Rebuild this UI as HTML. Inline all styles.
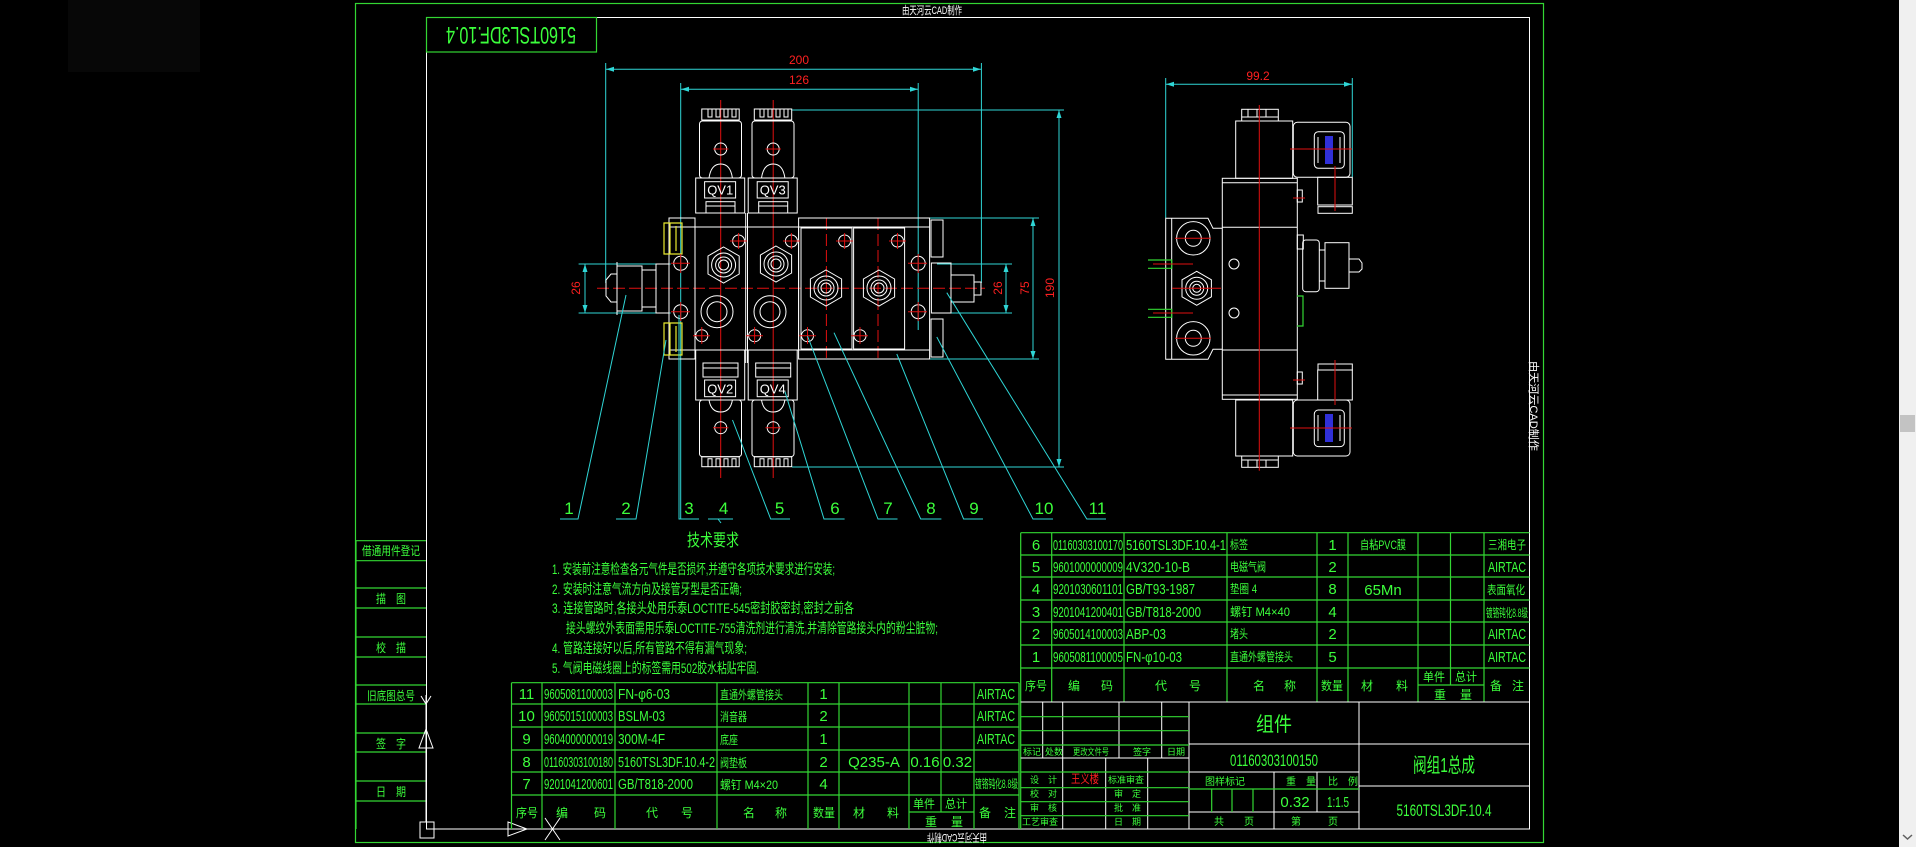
<!DOCTYPE html>
<html><head><meta charset="utf-8"><style>
html,body{margin:0;padding:0;background:#000;overflow:hidden}
svg{display:block}
.w{stroke:#fff;fill:none;stroke-width:1}
.c{stroke:#2fd6d6;fill:none;stroke-width:1}
.gl{stroke:#33d633;fill:none;stroke-width:1.2}
.r{stroke:#e01010;fill:none;stroke-width:1}
.rd{stroke:#e01010;fill:none;stroke-width:1;stroke-dasharray:12 4}
.y{stroke:#e8e830;fill:none;stroke-width:1.2}
text{font-family:"Liberation Sans","Noto Sans CJK SC",sans-serif}
.t{fill:#3cff3c;font-size:15px}
.tc{fill:#3cff3c;font-size:12px}
.tr{fill:#ff2020;font-size:12px}
</style></head><body>
<svg width="1916" height="847" viewBox="0 0 1916 847" xmlns="http://www.w3.org/2000/svg">
<rect width="1916" height="847" fill="#000"/>
<rect x="68" y="0" width="132" height="72" fill="#070707"/>
<!-- scrollbar -->
<rect x="1899" y="0" width="17" height="847" fill="#f0f0f0"/>
<rect x="1900" y="415" width="15" height="17" fill="#c3c3c3"/>
<path d="M1903 835 l4.5 4 l4.5 -4" stroke="#606060" fill="none" stroke-width="1.5"/>
<!-- frames -->
<rect x="355.5" y="3.5" width="1188" height="839" class="gl"/>
<rect x="426.5" y="17.5" width="1103" height="811.5" class="w"/>
<rect x="426.5" y="17.5" width="170" height="34.5" class="gl"/>
<text transform="rotate(180 511 35)" x="511" y="43" text-anchor="middle" class="t" style="font-size:24px" textLength="130" lengthAdjust="spacingAndGlyphs">5160TSL3DF.10.4</text>
<text x="932" y="14" text-anchor="middle" fill="#fff" font-size="11" textLength="60" lengthAdjust="spacingAndGlyphs">由天河云CAD制作</text>
<text transform="rotate(180 957 838)" x="957" y="842" text-anchor="middle" fill="#fff" font-size="11" textLength="60" lengthAdjust="spacingAndGlyphs">由天河云CAD制作</text>
<text transform="rotate(90 1534 406)" x="1534" y="410" text-anchor="middle" fill="#fff" font-size="11" textLength="90" lengthAdjust="spacingAndGlyphs">由天河云CAD制作</text>

<!-- left column -->
<g class="gl">
<path d="M356 540.7H426M356 560.7H426M356 588H426M356 608H426M356 637H426M356 657H426M356 685H426M356 704H426M356 733H426M356 752H426M356 781H426M356 801H426M356 540.7V829"/>
</g>
<g class="tc" text-anchor="middle">
<text x="391" y="555" textLength="58" lengthAdjust="spacingAndGlyphs">借通用件登记</text>
<text x="391" y="603" textLength="30" lengthAdjust="spacingAndGlyphs">描　图</text>
<text x="391" y="652" textLength="30" lengthAdjust="spacingAndGlyphs">校　描</text>
<text x="391" y="700" textLength="48" lengthAdjust="spacingAndGlyphs">旧底图总号</text>
<text x="391" y="748" textLength="30" lengthAdjust="spacingAndGlyphs">签　字</text>
<text x="391" y="796" textLength="30" lengthAdjust="spacingAndGlyphs">日　期</text>
</g>
<!-- UCS icon -->
<g class="w">
<path d="M426 695V822M421 696l5 8l5 -8M426 729l-7 19h14z M420 822h14v16h-14z M434 829H510 M508 822l19 7l-19 7z M545 818l15 22M560 818l-15 22"/>
</g>

<!-- technical requirements -->
<text x="713" y="546" text-anchor="middle" class="t" style="font-size:17px" textLength="52" lengthAdjust="spacingAndGlyphs">技术要求</text>
<g class="t" style="font-size:14px">
<text x="552" y="574" textLength="283" lengthAdjust="spacingAndGlyphs">1. 安装前注意检查各元气件是否损坏,并遵守各项技术要求进行安装;</text>
<text x="552" y="594" textLength="190" lengthAdjust="spacingAndGlyphs">2. 安装时注意气流方向及接管牙型是否正确;</text>
<text x="552" y="613" textLength="302" lengthAdjust="spacingAndGlyphs">3. 连接管路时,各接头处用乐泰LOCTITE-545密封胶密封,密封之前各</text>
<text x="566" y="633" textLength="372" lengthAdjust="spacingAndGlyphs">接头螺纹外表面需用乐泰LOCTITE-755清洗剂进行清洗,并清除管路接头内的粉尘脏物;</text>
<text x="552" y="653" textLength="195" lengthAdjust="spacingAndGlyphs">4. 管路连接好以后,所有管路不得有漏气现象;</text>
<text x="552" y="673" textLength="207" lengthAdjust="spacingAndGlyphs">5. 气阀电磁线圈上的标签需用502胶水粘贴牢固.</text>
</g>

<!-- lower-left parts table -->
<g class="gl">
<path d="M511.5 682.7H1019M511.5 704H1019M511.5 727H1019M511.5 750H1019M511.5 772H1019M511.5 795H1019M909 812H974"/>
<path d="M511.5 682.7V829M542 682.7V829M615 682.7V829M717 682.7V829M808 682.7V829M839 682.7V829M909 682.7V829M941 682.7V812M974 682.7V829M1019 682.7V829"/>
</g>
<g class="t">
<g text-anchor="middle"><text x="526.5" y="699">11</text><text x="526.5" y="721">10</text><text x="526.5" y="744">9</text><text x="526.5" y="767">8</text><text x="526.5" y="789">7</text>
<text x="823.5" y="699">1</text><text x="823.5" y="721">2</text><text x="823.5" y="744">1</text><text x="823.5" y="767">2</text><text x="823.5" y="789">4</text>
<text x="874" y="767">Q235-A</text><text x="925" y="767">0.16</text><text x="957.5" y="767">0.32</text></g>
<text x="544" y="699" textLength="69" lengthAdjust="spacingAndGlyphs">9605081100003</text>
<text x="544" y="721" textLength="69" lengthAdjust="spacingAndGlyphs">9605015100003</text>
<text x="544" y="744" textLength="69" lengthAdjust="spacingAndGlyphs">9604000000019</text>
<text x="544" y="767" textLength="69" lengthAdjust="spacingAndGlyphs">01160303100180</text>
<text x="544" y="789" textLength="69" lengthAdjust="spacingAndGlyphs">9201041200601</text>
<text x="618" y="699" textLength="52" lengthAdjust="spacingAndGlyphs">FN-φ6-03</text>
<text x="618" y="721" textLength="47" lengthAdjust="spacingAndGlyphs">BSLM-03</text>
<text x="618" y="744" textLength="47" lengthAdjust="spacingAndGlyphs">300M-4F</text>
<text x="618" y="767" textLength="97" lengthAdjust="spacingAndGlyphs">5160TSL3DF.10.4-2</text>
<text x="618" y="789" textLength="75" lengthAdjust="spacingAndGlyphs">GB/T818-2000</text>
<text x="977" y="699" textLength="38" lengthAdjust="spacingAndGlyphs">AIRTAC</text>
<text x="977" y="721" textLength="38" lengthAdjust="spacingAndGlyphs">AIRTAC</text>
<text x="977" y="744" textLength="38" lengthAdjust="spacingAndGlyphs">AIRTAC</text>
</g>
<g class="tc">
<text x="720" y="699" textLength="63" lengthAdjust="spacingAndGlyphs">直通外螺管接头</text>
<text x="720" y="721" textLength="27" lengthAdjust="spacingAndGlyphs">消音器</text>
<text x="720" y="744" textLength="18" lengthAdjust="spacingAndGlyphs">底座</text>
<text x="720" y="767" textLength="27" lengthAdjust="spacingAndGlyphs">阀垫板</text>
<text x="720" y="789" textLength="58" lengthAdjust="spacingAndGlyphs">螺钉 M4×20</text>
<text x="975" y="788" textLength="43" lengthAdjust="spacingAndGlyphs">镀铬钝化8.8级</text>
<text x="516" y="817" textLength="22" lengthAdjust="spacingAndGlyphs">序号</text><text x="556" y="817">编</text><text x="594" y="817">码</text>
<text x="646" y="817">代</text><text x="681" y="817">号</text><text x="743" y="817">名</text><text x="775" y="817">称</text>
<text x="813" y="817" textLength="22" lengthAdjust="spacingAndGlyphs">数量</text><text x="853" y="817">材</text><text x="887" y="817">料</text>
<text x="913" y="808" textLength="22" lengthAdjust="spacingAndGlyphs">单件</text><text x="945" y="808" textLength="22" lengthAdjust="spacingAndGlyphs">总计</text><text x="925" y="826">重</text><text x="951" y="826">量</text>
<text x="979" y="817">备</text><text x="1004" y="817">注</text>
</g>

<!-- right parts table -->
<g class="gl">
<path d="M1020.7 532.7H1529.5M1020.7 555H1529.5M1020.7 577H1529.5M1020.7 600H1529.5M1020.7 622H1529.5M1020.7 645H1529.5M1020.7 668H1529.5M1418 685H1484"/>
<path d="M1020.7 532.7V702M1051.7 532.7V702M1124 532.7V702M1227 532.7V702M1317 532.7V702M1348 532.7V702M1418 532.7V702M1450.5 532.7V685M1484 532.7V702"/>
<path d="M1020.7 702V829"/>
</g>
<g class="t">
<g text-anchor="middle"><text x="1036" y="550">6</text><text x="1036" y="572">5</text><text x="1036" y="594">4</text><text x="1036" y="617">3</text><text x="1036" y="639">2</text><text x="1036" y="662">1</text>
<text x="1332.5" y="550">1</text><text x="1332.5" y="572">2</text><text x="1332.5" y="594">8</text><text x="1332.5" y="617">4</text><text x="1332.5" y="639">2</text><text x="1332.5" y="662">5</text>
<text x="1383" y="595">65Mn</text></g>
<text x="1053" y="550" textLength="70" lengthAdjust="spacingAndGlyphs">01160303100170</text>
<text x="1053" y="572" textLength="70" lengthAdjust="spacingAndGlyphs">9601000000009</text>
<text x="1053" y="594" textLength="70" lengthAdjust="spacingAndGlyphs">9201030601101</text>
<text x="1053" y="617" textLength="70" lengthAdjust="spacingAndGlyphs">9201041200401</text>
<text x="1053" y="639" textLength="70" lengthAdjust="spacingAndGlyphs">9605014100003</text>
<text x="1053" y="662" textLength="70" lengthAdjust="spacingAndGlyphs">9605081100005</text>
<text x="1126" y="550" textLength="100" lengthAdjust="spacingAndGlyphs">5160TSL3DF.10.4-1</text>
<text x="1126" y="572" textLength="64" lengthAdjust="spacingAndGlyphs">4V320-10-B</text>
<text x="1126" y="594" textLength="69" lengthAdjust="spacingAndGlyphs">GB/T93-1987</text>
<text x="1126" y="617" textLength="75" lengthAdjust="spacingAndGlyphs">GB/T818-2000</text>
<text x="1126" y="639" textLength="40" lengthAdjust="spacingAndGlyphs">ABP-03</text>
<text x="1126" y="662" textLength="56" lengthAdjust="spacingAndGlyphs">FN-φ10-03</text>
<text x="1488" y="639" textLength="38" lengthAdjust="spacingAndGlyphs">AIRTAC</text>
<text x="1488" y="662" textLength="38" lengthAdjust="spacingAndGlyphs">AIRTAC</text>
<text x="1488" y="572" textLength="38" lengthAdjust="spacingAndGlyphs">AIRTAC</text>
</g>
<g class="tc">
<text x="1230" y="549" textLength="18" lengthAdjust="spacingAndGlyphs">标签</text>
<text x="1230" y="571" textLength="36" lengthAdjust="spacingAndGlyphs">电磁气阀</text>
<text x="1230" y="593" textLength="27" lengthAdjust="spacingAndGlyphs">垫圈 4</text>
<text x="1230" y="616" textLength="60" lengthAdjust="spacingAndGlyphs">螺钉 M4×40</text>
<text x="1230" y="638" textLength="18" lengthAdjust="spacingAndGlyphs">堵头</text>
<text x="1230" y="661" textLength="63" lengthAdjust="spacingAndGlyphs">直通外螺管接头</text>
<text x="1360" y="549" textLength="46" lengthAdjust="spacingAndGlyphs">自粘PVC膜</text>
<text x="1488" y="549" textLength="38" lengthAdjust="spacingAndGlyphs">三湘电子</text>
<text x="1487" y="594" textLength="38" lengthAdjust="spacingAndGlyphs">表面氧化</text>
<text x="1486" y="617" textLength="42" lengthAdjust="spacingAndGlyphs">镀铬钝化8.8级</text>
<text x="1025" y="690" textLength="22" lengthAdjust="spacingAndGlyphs">序号</text><text x="1068" y="690">编</text><text x="1101" y="690">码</text>
<text x="1155" y="690">代</text><text x="1189" y="690">号</text><text x="1253" y="690">名</text><text x="1284" y="690">称</text>
<text x="1321" y="690" textLength="22" lengthAdjust="spacingAndGlyphs">数量</text><text x="1361" y="690">材</text><text x="1396" y="690">料</text>
<text x="1423" y="681" textLength="22" lengthAdjust="spacingAndGlyphs">单件</text><text x="1455" y="681" textLength="22" lengthAdjust="spacingAndGlyphs">总计</text><text x="1434" y="699">重</text><text x="1460" y="699">量</text>
<text x="1490" y="690">备</text><text x="1512" y="690">注</text>
</g>

<!-- title block -->
<g class="w">
<path d="M1020.7 702H1529.5M1189 744H1529.5M1359 786H1529.5M1189 772H1359M1189 812H1359M1020.7 758H1189"/>
<path d="M1042.7 702V758M1062.7 702V829M1119 702V758M1161.7 702V758M1105.7 758V829M1147.7 758V829M1189 702V829M1359 702V829M1274 772V829M1317 772V812"/>
</g>
<g class="gl">
<path d="M1020.7 716.7H1189M1020.7 730.7H1189M1020.7 745H1189M1020.7 772H1189M1020.7 787.7H1189M1020.7 801.7H1189M1020.7 815.7H1189M1189 789H1359M1211.7 789V812M1232 789V812M1253 789V812"/>
</g>
<g class="tc" style="font-size:10px">
<text x="1023" y="755" font-size="9">标记</text><text x="1045" y="755" font-size="9">处数</text><text x="1073" y="755" font-size="9" textLength="36" lengthAdjust="spacingAndGlyphs">更改文件号</text>
<text x="1133" y="755" font-size="9">签字</text><text x="1167" y="755" font-size="9">日期</text>
<text x="1030" y="783" font-size="9">设　计</text><text x="1030" y="797" font-size="9">校　对</text><text x="1030" y="811" font-size="9">审　核</text><text x="1022" y="825" font-size="9">工艺审查</text>
<text x="1108" y="783" font-size="9">标准审查</text><text x="1114" y="797" font-size="9">审　定</text><text x="1114" y="811" font-size="9">批　准</text><text x="1114" y="825" font-size="9">日　期</text>
<text x="1205" y="785">图样标记</text><text x="1286" y="785">重　量</text><text x="1328" y="785">比　例</text>
<text x="1214" y="825">共</text><text x="1244" y="825">页</text><text x="1291" y="825">第</text><text x="1328" y="825">页</text>
</g>
<text x="1071" y="783" class="tr" font-size="10" textLength="28" lengthAdjust="spacingAndGlyphs">王义楼</text>
<text x="1274" y="731" text-anchor="middle" class="t" style="font-size:20px" textLength="36" lengthAdjust="spacingAndGlyphs">组件</text>
<text x="1274" y="766" text-anchor="middle" class="t" style="font-size:17px" textLength="88" lengthAdjust="spacingAndGlyphs">01160303100150</text>
<text x="1295" y="807" text-anchor="middle" class="t">0.32</text>
<text x="1338" y="807" text-anchor="middle" class="t" textLength="22" lengthAdjust="spacingAndGlyphs">1:1.5</text>
<text x="1444" y="772" text-anchor="middle" class="t" style="font-size:20px" textLength="62" lengthAdjust="spacingAndGlyphs">阀组1总成</text>
<text x="1444" y="816" text-anchor="middle" class="t" style="font-size:17px" textLength="95" lengthAdjust="spacingAndGlyphs">5160TSL3DF.10.4</text>

<!-- ===== FRONT VIEW ===== -->
<g class="c">
<path d="M605.7 63V283M981.4 63V283M605.7 69.3H981.4M680.7 83V519M918.2 83V330M680.7 89.3H918.2"/>
<path d="M792 110H1064M792 467H1064M1059 110V467M930 218H1039M930 359H1039M1033 218V359M937 264H1012M937 313H1012M1006 264V313M578.6 264H670.7M578.6 313H670.7M585 264V313"/>
</g>
<g fill="#2fd6d6">
<path d="M606 69.3l8 -2.5v5z M981 69.3l-8 -2.5v5z M681 89.3l8 -2.5v5z M918 89.3l-8 -2.5v5z"/>
<path d="M1059 110l-2.5 8h5z M1059 467l-2.5 -8h5z M1033 218l-2.5 8h5z M1033 359l-2.5 -8h5z M1006 264l-2.5 8h5z M1006 313l-2.5 -8h5z M585 264l-2.5 8h5z M585 313l-2.5 -8h5z"/>
</g>
<g class="tr" text-anchor="middle">
<text x="799" y="64">200</text><text x="799" y="84">126</text>
<text transform="rotate(-90 1050 288)" x="1050" y="292">190</text>
<text transform="rotate(-90 1025 288)" x="1025" y="292">75</text>
<text transform="rotate(-90 998 288)" x="998" y="292">26</text>
<text transform="rotate(-90 576 288)" x="576" y="292">26</text>
</g>

<path class="rd" d="M597 288.3H985M826.4 218V358M878 218V358"/>
<path class="r" d="M720.7 100V478M773.2 100V478"/>

<g class="w">
<rect x="669" y="218" width="26" height="141"/>
<path d="M669 227H695M669 350H695"/>
<rect x="695" y="227" width="103.6" height="123"/>
<path d="M745.7 213V363M747.5 213V363"/>
<rect x="798.6" y="218" width="131" height="141"/>
<rect x="801" y="228" width="51" height="121"/>
<rect x="853.6" y="228" width="51" height="121"/>
<path d="M798.6 227H929.6M798.6 350H929.6"/>
<polygon points="723.6,247 739.2,256 739.2,274 723.6,283 708,274 708,256"/>
<circle cx="723.6" cy="265" r="12"/><circle cx="723.6" cy="265" r="8"/><circle cx="723.6" cy="265" r="5"/>
<polygon points="776,246 791.6,255 791.6,273 776,282 760.4,273 760.4,255"/>
<circle cx="776" cy="264" r="12"/><circle cx="776" cy="264" r="8"/><circle cx="776" cy="264" r="5"/>
<polygon points="826,270 841.6,279 841.6,297 826,306 810.4,297 810.4,279"/>
<circle cx="826" cy="288" r="12"/><circle cx="826" cy="288" r="8"/><circle cx="826" cy="288" r="5"/>
<polygon points="879,270 894.6,279 894.6,297 879,306 863.4,297 863.4,279"/>
<circle cx="879" cy="288" r="12"/><circle cx="879" cy="288" r="8"/><circle cx="879" cy="288" r="5"/>
<circle cx="717" cy="311.7" r="16"/><circle cx="717" cy="311.7" r="10"/>
<circle cx="770" cy="311.7" r="16"/><circle cx="770" cy="311.7" r="10"/>
<rect x="617" y="266" width="25" height="45"/><rect x="642" y="270" width="14" height="37"/><rect x="656" y="264" width="13" height="49"/>
<path d="M617 262V315M606 280l5 -6h6v28h-6l-5 -6z"/>
<rect x="931.4" y="263" width="19.6" height="50"/><rect x="951" y="275" width="23" height="27"/><path d="M974 282h7v13h-7"/>
<rect x="931" y="220" width="12" height="37"/><rect x="931" y="319" width="12" height="38"/>
</g>
<g class="y">
<path d="M664 223h18v31h-18z M670 223v31M676 226v25M664 323h18v32h-18z M670 323v32M676 326v26"/>
</g>
<g class="w">
<circle cx="738.6" cy="241" r="6"/><circle cx="791.4" cy="241" r="6"/><circle cx="844.6" cy="241" r="6"/><circle cx="897.5" cy="241" r="6"/>
<circle cx="680.7" cy="263.3" r="7"/><circle cx="680.7" cy="311.7" r="7"/><circle cx="918.2" cy="263.3" r="7"/><circle cx="918.2" cy="311.7" r="7"/>
<circle cx="701.8" cy="335.7" r="6"/><circle cx="754.6" cy="335.7" r="6"/><circle cx="807.5" cy="335.7" r="6"/><circle cx="860" cy="335.7" r="6"/>
</g>
<path class="r" d="M730 241h17M738.6 233v16M783 241h17M791.4 233v16M836 241h17M844.6 233v16M889 241h17M897.5 233v16M671 263.3h19M680.7 254v19M671 311.7h19M680.7 302v19M908 263.3h19M918.2 254v19M908 311.7h19M918.2 302v19M693 335.7h17M701.8 327v17M746 335.7h17M754.6 327v17M799 335.7h17M807.5 327v17M851 335.7h17M860 327v17"/>

<g class="w">
<rect x="701.8" y="109" width="37.4" height="11"/><path d="M708 109v8h4v-8M716 109v8h4v-8M724 109v8h4v-8M732 109v8h4v-8"/>
<rect x="699.5" y="121" width="42" height="57" rx="3"/><circle cx="720.7" cy="149" r="6"/><path d="M709 178q2 -14 11.7 -14t11.7 14"/>
<rect x="695.7" y="178" width="49" height="35"/><rect x="704.6" y="181.7" width="31" height="16.3"/><rect x="706" y="201.7" width="29" height="11.3"/><path d="M706 206h29"/>
<rect x="754.3" y="109" width="37.4" height="11"/><path d="M760 109v8h4v-8M768 109v8h4v-8M776 109v8h4v-8M784 109v8h4v-8"/>
<rect x="752" y="121" width="42" height="57" rx="3"/><circle cx="773.2" cy="149" r="6"/><path d="M761.5 178q2 -14 11.7 -14t11.7 14"/>
<rect x="748.2" y="178" width="49" height="35"/><rect x="757.2" y="181.7" width="31" height="16.3"/><rect x="758.7" y="201.7" width="29" height="11.3"/><path d="M758.7 206h29"/>
<rect x="695.7" y="350" width="49" height="50"/><rect x="704.6" y="380" width="31" height="16.7"/><rect x="703" y="363" width="35" height="14"/><path d="M703 368h35"/>
<rect x="699.5" y="400" width="42" height="56.7" rx="3"/><circle cx="720.7" cy="427.7" r="6"/><path d="M709 400q2 12 11.7 12t11.7 -12"/>
<rect x="701.8" y="456.7" width="37.4" height="10"/><path d="M708 466.7v-8h4v8M716 466.7v-8h4v8M724 466.7v-8h4v8M732 466.7v-8h4v8"/>
<rect x="748.2" y="350" width="49" height="50"/><rect x="757.2" y="380" width="31" height="16.7"/><rect x="755.7" y="363" width="35" height="14"/><path d="M755.7 368h35"/>
<rect x="752" y="400" width="42" height="56.7" rx="3"/><circle cx="773.2" cy="427.7" r="6"/><path d="M761.5 400q2 12 11.7 12t11.7 -12"/>
<rect x="754.3" y="456.7" width="37.4" height="10"/><path d="M760 466.7v-8h4v8M768 466.7v-8h4v8M776 466.7v-8h4v8M784 466.7v-8h4v8"/>
</g>
<path class="r" d="M713 149h15.4M765.5 149h15.4M713 427.7h15.4M765.5 427.7h15.4"/>
<g fill="#fff" font-family="Liberation Serif,serif" font-size="13" text-anchor="middle">
<text x="720.2" y="194.5">QV1</text><text x="772.7" y="194.5">QV3</text><text x="720.2" y="393.5">QV2</text><text x="772.7" y="393.5">QV4</text>
</g>

<g class="c">
<path d="M626 295L578 519H560M666 340L636 519H616M679 315V519H699M708 519H733M718 519l3 4M732.5 420L770.7 519H790M785 391.7L824 519H844.6M807.5 336L878 519H897.5M834 332.7L920.7 519H941.4M896.8 354L963.6 519H983M936.8 337L1033 519H1053M946.8 292.7L1086.8 519H1106"/>
</g>
<g class="t" style="font-size:17px" text-anchor="middle">
<text x="569" y="514">1</text><text x="626" y="514">2</text><text x="689" y="514">3</text><text x="723.6" y="514">4</text><text x="779.6" y="514">5</text><text x="835" y="514">6</text><text x="888" y="514">7</text><text x="931" y="514">8</text><text x="974" y="514">9</text><text x="1044" y="514">10</text><text x="1097.5" y="514">11</text>
</g>

<!-- ===== SIDE VIEW ===== -->
<g class="c"><path d="M1165.7 78V218M1352.3 78V177M1165.7 84.3H1352.3"/></g>
<path fill="#2fd6d6" d="M1166 84.3l8 -2.5v5z M1352 84.3l-8 -2.5v5z"/>
<text x="1258" y="80" text-anchor="middle" class="tr">99.2</text>
<g class="w">
<rect x="1222.3" y="178.3" width="75" height="221"/>
<path d="M1222.3 182.7H1297.3M1222.3 227.3H1297.3M1222.3 350H1297.3M1222.3 395H1297.3"/>
<path d="M1222.3 228.3H1213l-5 -10H1165.7V359.3H1208l5 -10h9.3"/>
<path d="M1171.7 218.3V359.3"/>
<circle cx="1193.3" cy="238.3" r="16.7"/><circle cx="1193.3" cy="238.3" r="8"/>
<circle cx="1193.3" cy="338.3" r="16.7"/><circle cx="1193.3" cy="338.3" r="8"/>
<polygon points="1196.7,271.3 1211.4,279.8 1211.4,296.8 1196.7,305.3 1182,296.8 1182,279.8"/>
<circle cx="1196.7" cy="288.3" r="11"/><circle cx="1196.7" cy="288.3" r="7"/><circle cx="1196.7" cy="288.3" r="4"/>
<rect x="1235.7" y="121" width="57" height="57.3"/><rect x="1241.7" y="109.3" width="36.6" height="11.7"/><path d="M1241.7 117h36.6M1248 109.3v8M1257 109.3v8M1266 109.3v8"/>
<rect x="1293.3" y="122.3" width="56.7" height="55" rx="4"/><rect x="1314.3" y="131.7" width="30" height="36.6" rx="4"/>
<path d="M1318 137v26M1340 137v26"/>
<rect x="1317.7" y="177.3" width="34.6" height="27.7"/><rect x="1318" y="206.7" width="34.3" height="6.6"/>
<rect x="1235.7" y="400" width="57" height="56"/><rect x="1241.7" y="456" width="36.6" height="11.3"/><path d="M1241.7 460h36.6M1248 460v7M1257 460v7M1266 460v7"/>
<rect x="1293.3" y="400" width="56.7" height="56" rx="4"/><rect x="1314.3" y="410" width="30" height="36.6" rx="4"/>
<path d="M1318 415v26M1340 415v26"/>
<rect x="1317.7" y="370" width="34.6" height="30"/><rect x="1318" y="364" width="34.3" height="6"/>
<rect x="1302.7" y="240" width="16.6" height="51.7" rx="3"/><rect x="1325" y="242.7" width="24" height="45.6"/><path d="M1319.3 250h5.7M1319.3 281h5.7M1349 259h10l3 4v6l-3 3h-10"/>
<rect x="1297.3" y="190" width="5" height="12"/><rect x="1297.3" y="235" width="6" height="14"/><rect x="1297.3" y="372" width="5" height="12"/>
</g>
<g class="gl"><path d="M1148 260h23.7v8.3h-23.7M1148 309.3h23.7v8h-23.7M1297 296h6v30h-6"/></g>
<g fill="#3030d8"><rect x="1325" y="136" width="8" height="28"/><rect x="1325" y="414" width="8" height="28"/></g>
<path class="r" d="M1259.3 105V470.7M1153 264h40M1153 313h40M1172 288.3h49M1175 238.3h36M1175 338.3h36M1290 149h62M1290 428h62M1335 166v45M1335 360v45M1293 198h12M1293 380h12"/>
<g class="w"><circle cx="1234" cy="264" r="5"/><circle cx="1234" cy="313" r="5"/></g>
</svg>
</body></html>
